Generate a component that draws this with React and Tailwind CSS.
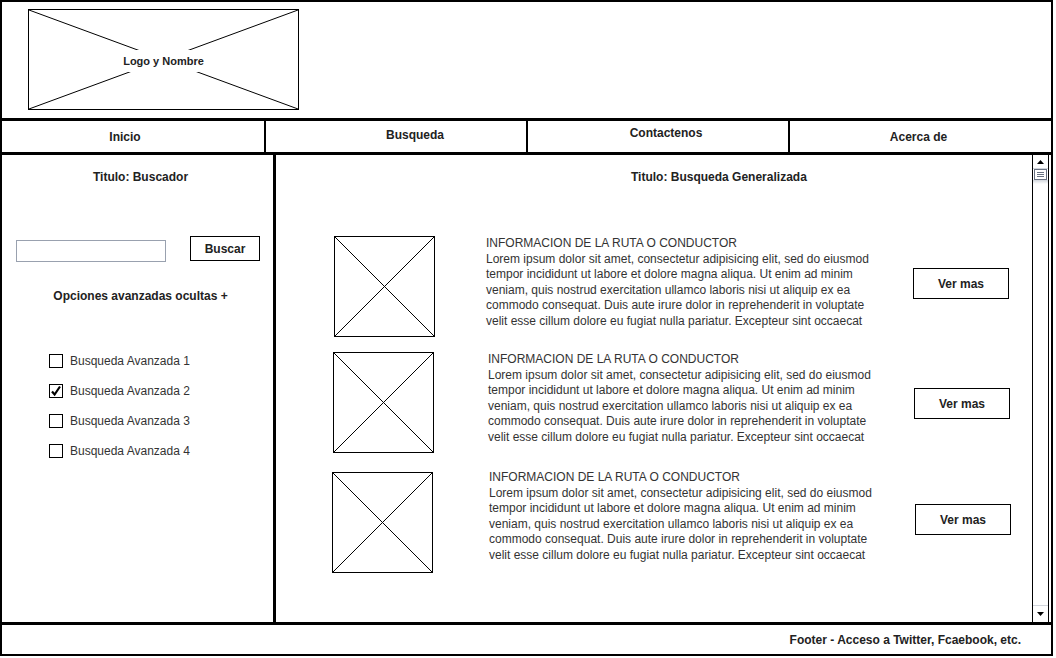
import React from 'react';

const font = { fontFamily: '"Liberation Sans", Arial, sans-serif' };

const LINES = [
  'Lorem ipsum dolor sit amet, consectetur adipisicing elit, sed do eiusmod',
  'tempor incididunt ut labore et dolore magna aliqua. Ut enim ad minim',
  'veniam, quis nostrud exercitation ullamco laboris nisi ut aliquip ex ea',
  'commodo consequat. Duis aute irure dolor in reprehenderit in voluptate',
  'velit esse cillum dolore eu fugiat nulla pariatur. Excepteur sint occaecat',
];

const NAV = [
  { label: 'Inicio', cls: 'w-[262px] pr-[16px] pt-[1px]' },
  { label: 'Busqueda', cls: 'w-[262px] border-l-2 border-black pl-[38px] pb-[3px]' },
  { label: 'Contactenos', cls: 'w-[262px] border-l-2 border-black pl-[16px] pb-[7px]' },
  { label: 'Acerca de', cls: 'flex-1 border-l-2 border-black pr-[4px]' },
];

const ITEMS = [
  { wrap: 'mt-[52px]', img: 'ml-[58px]', text: 'ml-[51px]', btn: 'ml-[27px] mt-[32px]' },
  { wrap: 'mt-[15px]', img: 'ml-[57px]', text: 'ml-[54px]', btn: 'ml-[26px] mt-[36px]' },
  { wrap: 'mt-[19px]', img: 'ml-[56px]', text: 'ml-[56px] -mt-[2px]', btn: 'ml-[26px] mt-[32px]' },
];

const OPTIONS = [
  { label: 'Busqueda Avanzada 1', checked: false },
  { label: 'Busqueda Avanzada 2', checked: true },
  { label: 'Busqueda Avanzada 3', checked: false },
  { label: 'Busqueda Avanzada 4', checked: false },
];

// caja con X (placeholder de imagen)
const Placeholder = ({ className }) => (
  <div className={`relative border border-black shrink-0 ${className}`}>
    <svg className="absolute inset-0 w-full h-full" viewBox="0 0 100 100" preserveAspectRatio="none">
      <line x1="0" y1="0" x2="100" y2="100" stroke="#000" strokeWidth="1" vectorEffect="non-scaling-stroke" />
      <line x1="100" y1="0" x2="0" y2="100" stroke="#000" strokeWidth="1" vectorEffect="non-scaling-stroke" />
    </svg>
  </div>
);

const Checkbox = ({ checked }) => (
  <div className="w-[14px] h-[14px] border border-black bg-white shrink-0 flex items-center justify-center">
    {checked && (
      <svg width="12" height="12" viewBox="0 0 12 12">
        <path d="M2 6.5 L4.6 9.5 L10 1.5" fill="none" stroke="#000" strokeWidth="2.2" />
      </svg>
    )}
  </div>
);

const Scrollbar = () => (
  <div className="w-[17px] mr-[2px] border-x border-black flex flex-col shrink-0">
    <div className="h-[14px] border-b border-gray-300 flex items-center justify-center">
      <svg width="7" height="4" viewBox="0 0 7 4"><path d="M0 4 L3.5 0 L7 4 Z" fill="#000" /></svg>
    </div>
    <div className="mx-[1px] h-[11px] border border-gray-500 bg-white flex flex-col items-center justify-center gap-[1px]">
      <div className="w-[7px] h-px bg-gray-500" />
      <div className="w-[7px] h-px bg-gray-500" />
      <div className="w-[7px] h-px bg-gray-500" />
    </div>
    <div className="h-[4px] bg-gradient-to-b from-gray-300 to-white" />
    <div className="flex-1" />
    <div className="h-[16px] border-t border-gray-300 mb-px flex items-center justify-center">
      <svg width="7" height="4" viewBox="0 0 7 4"><path d="M0 0 L3.5 4 L7 0 Z" fill="#000" /></svg>
    </div>
  </div>
);

export default function App() {
  return (
    <div className="w-[1056px] h-[658px] bg-white" style={font}>
      <div className="w-[1053px] h-[656px] border-2 border-black flex flex-col text-[12px] text-[#222]">
        {/* cabecera */}
        <header className="h-[116px] shrink-0 pl-[26px] pt-[7px]">
          <div className="relative w-[271px] h-[101px] border border-black flex items-center justify-center">
            <svg className="absolute inset-0 w-full h-full" viewBox="0 0 100 100" preserveAspectRatio="none">
              <line x1="0" y1="0" x2="100" y2="100" stroke="#000" strokeWidth="1" vectorEffect="non-scaling-stroke" />
              <line x1="100" y1="0" x2="0" y2="100" stroke="#000" strokeWidth="1" vectorEffect="non-scaling-stroke" />
            </svg>
            <span className="relative bg-white font-bold leading-[14px] py-[4px] px-[1px] mt-[2px] text-[11px]">Logo y Nombre</span>
          </div>
        </header>

        {/* navegacion */}
        <nav className="h-[37px] shrink-0 border-y-[3px] border-black flex">
          {NAV.map((n) => (
            <div key={n.label} className={`shrink-0 flex items-center justify-center font-bold ${n.cls}`}>
              {n.label}
            </div>
          ))}
        </nav>

        {/* cuerpo */}
        <div className="flex flex-1 min-h-0">
          <aside className="w-[274px] shrink-0 border-r-[3px] border-black flex flex-col">
            <div className="pt-[15px] text-center font-bold leading-[14px] pl-[6px]">Titulo: Buscador</div>
            <div className="flex items-start mt-[52px] pl-[14px]">
              <div className="w-[150px] h-[22px] mt-[4px] border border-gray-400" />
              <button className="ml-[24px] w-[70px] h-[25px] border border-black font-bold">Buscar</button>
            </div>
            <div className="mt-[27px] text-center font-bold leading-[14px] pl-[6px]">Opciones avanzadas ocultas +</div>
            <div className="mt-[43px] pl-[47px] flex flex-col">
              {OPTIONS.map((o) => (
                <div key={o.label} className="h-[30px] flex items-center gap-[7px]">
                  <Checkbox checked={o.checked} />
                  <span className="text-[#333]">{o.label}</span>
                </div>
              ))}
            </div>
          </aside>

          <main className="flex-1 flex min-w-0">
            <div className="flex-1 flex flex-col">
              <div className="pt-[15px] pl-[355px] font-bold leading-[14px]">Titulo: Busqueda Generalizada</div>
              {ITEMS.map((it, i) => (
                <div key={i} className={`flex items-start ${it.wrap}`}>
                  <Placeholder className={`w-[101px] h-[101px] ${it.img}`} />
                  <div className={`w-[400px] text-[#333] leading-[15.6px] whitespace-nowrap ${it.text}`}>
                    <div>INFORMACION DE LA RUTA O CONDUCTOR</div>
                    {LINES.map((l) => (
                      <div key={l}>{l}</div>
                    ))}
                  </div>
                  <button className={`w-[96px] h-[31px] border border-black font-bold shrink-0 ${it.btn}`}>Ver mas</button>
                </div>
              ))}
            </div>
            <Scrollbar />
          </main>
        </div>

        {/* pie */}
        <footer className="h-[32px] shrink-0 border-t-[3px] border-black flex items-center justify-end pr-[30px] font-bold">
          Footer - Acceso a Twitter, Fcaebook, etc.
        </footer>
      </div>
    </div>
  );
}
